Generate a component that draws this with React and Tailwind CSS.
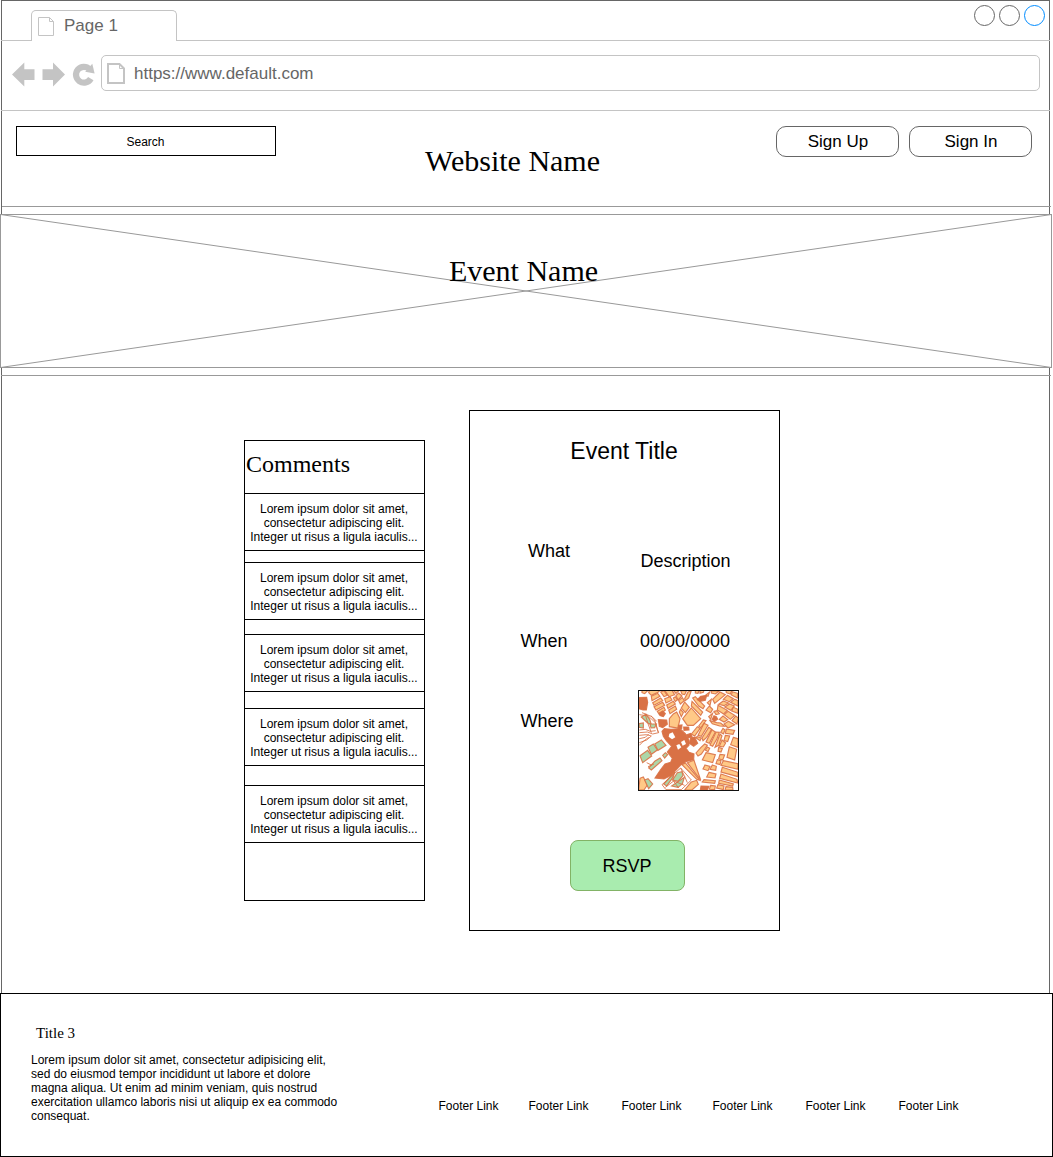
import React from "react";

const comments = [
  { id: 1, gap: "mt-0" },
  { id: 2, gap: "mt-[11px]" },
  { id: 3, gap: "mt-[14px]" },
  { id: 4, gap: "mt-[16px]" },
  { id: 5, gap: "mt-[19px]" },
];

const footerLinks = [
  "ml-[95.5px]",
  "ml-[30px]",
  "ml-[33px]",
  "ml-[31px]",
  "ml-[33px]",
  "ml-[33px]",
];

const blocks = [
  // north-west
  "30,19 48,19 38,29 30,26",
  "52,19 84,19 78,25 58,34 50,26",
  "58,37 77,28 84,37 60,50",
  "62,56 86,42 92,50 66,64",
  "66,68 92,55 98,64 72,78",
  "86,24 96,20 106,34 96,38",
  "98,19 120,19 128,32 111,38",
  "98,44 114,38 120,48 102,57",
  "104,63 124,52 130,60 108,73",
  "110,78 130,66 134,76 114,89",
  "76,82 96,70 100,78 82,92",
  "124,19 142,19 132,28",
  "132,35 140,27 150,36 138,48",
  "140,50 151,41 157,50 145,60",
  "124,42 130,38 136,47 130,53",
  "112,104 124,90 134,84 144,104 138,132 112,128",
  // north-centre
  "146,20 164,19 158,32 150,30",
  "168,24 178,20 170,42 160,50 158,44",
  "158,54 172,70 160,86 148,72",
  "146,76 154,86 148,98 142,84",
  "178,72 206,104 184,124 166,124 152,104",
  "182,42 190,38 218,66 213,74 200,66",
  "180,52 212,84 206,94 178,66",
  "190,19 202,19 198,28 190,27",
  "204,19 216,19 214,25 204,28",
  // north-east
  "220,34 233,24 228,37",
  "232,66 242,76 236,86 222,78",
  "226,56 238,46 234,64",
  "238,20 262,21 250,30 238,27",
  "264,24 280,32 262,47 248,58 242,46",
  "282,19 300,19 295,30 283,26",
  "301,23 317,28 317,42 298,33",
  "286,34 304,44 292,53 274,46",
  "308,46 318,50 318,66 296,55",
  "274,51 290,57 276,65 260,61",
  "293,60 307,66 296,79 278,69",
  "258,64 286,79 275,90 256,78",
  "288,82 308,94 295,106 277,92",
  "304,70 318,76 318,88 299,81",
  "311,96 319,102 315,120 300,110",
  "273,96 287,107 276,114 262,106",
  "289,112 308,122 288,132 276,120",
  "246,82 255,80 262,89 252,92",
  "230,98 242,88 236,106",
  "232,108 240,112 254,116 266,117 278,127 263,126 241,119",
  // east
  "200,126 214,108 222,110 206,132",
  "178,150 196,128 204,134 188,156",
  "216,118 228,124 208,157 198,154",
  "190,160 196,158 208,162 204,170",
  "230,130 239,136 224,160 213,170 210,162",
  "240,137 250,144 232,178 222,174",
  "252,144 262,145 255,164 242,187 234,183",
  "264,150 270,156 260,184 249,190",
  "273,133 279,138 274,150 266,145",
  "283,135 308,139 303,151 280,148",
  "280,154 293,156 287,173 276,170",
  "270,168 281,177 274,189 262,187",
  "260,190 271,194 267,204 258,202",
  "292,188 314,196 308,228 285,220",
  "304,160 318,164 318,190 296,182",
  "264,211 278,213 272,228 260,224",
  "256,227 267,230 264,242 252,239",
  "274,230 318,239 318,256 267,244",
  "271,250 318,265 318,278 267,264",
  "267,270 315,286 317,297 263,283",
  "262,288 304,300 302,306 260,298",
  "258,302 276,306 274,317 254,312",
  "282,308 302,310 303,318 279,318",
  "207,190 218,180 226,184 208,210 198,216 192,207",
  "226,189 233,193 228,203 220,198",
  "222,206 250,212 242,236 211,228",
  "241,243 253,247 251,259 234,256",
  "219,243 234,247 228,260 213,255",
  "231,265 252,270 249,282 224,279",
  "216,287 250,290 248,298 211,294",
  "236,304 250,306 248,317 232,316",
  // south
  "150,242 160,237 204,289 194,286",
  "166,236 186,229 206,288",
  "178,294 194,289 199,301 180,318 158,318",
  "24,283 34,279 46,303 36,318 20,318",
];

const darkBlocks = [
  "20,41 44,40 47,55 43,78 33,78 20,74",
  "82,87 92,81 100,89 94,98 84,95",
  "79,107 104,108 106,121 92,131 82,127",
  "206,37 224,34 220,49 204,52 196,47",
  "246,95 253,98 257,105 248,112 240,107",
  "97,134 117,136 144,134 160,149 171,169 171,184 162,193 171,205 186,210 185,227 161,233 145,244 118,274 96,285 69,282 85,258 99,240 116,235 121,223 106,204 119,187 103,170 94,157 90,142",
  "176,161 188,160 197,178 185,187 172,178",
  "164,152 176,148 180,158 168,162",
  "155,129 170,129 171,138 156,139",
  "139,124 150,123 149,134 139,134",
  "207,306 231,307 226,318 205,318",
];

const greenBlocks = [
  "48,190 64,180 76,198 58,211",
  "68,180 88,168 102,184 78,199",
  "24,215 47,199 59,216 32,236",
  "68,232 84,222 90,230 58,258 50,252",
  "92,214 100,206 107,212 98,222",
  "28,99 42,91 53,106 58,122 46,116",
  "54,120 73,120 68,131 57,132",
  "21,119 34,117 34,132 21,130",
  "95,300 128,264 120,284 104,306",
  "122,288 136,266 150,263 153,275 138,292",
  "119,306 157,280 151,300 138,310",
  "38,288 48,284 62,300 50,314",
];

const mapLines = [
  "22,92 49,96 71,117 76,137 80,146",
  "30,86 60,98 74,112",
  "39,89 48,119 58,146",
  "57,95 69,111 79,146",
  "22,138 40,136 55,142 71,140",
  "22,146 46,144 62,150 80,146",
  "22,154 44,152 58,156 44,168 22,176",
  "22,164 40,160 50,150",
  "22,184 34,172 50,160",
  "90,302 146,252 178,288 148,317 102,317 90,302",
  "100,310 125,291 158,304",
  "146,252 160,282 166,296",
  "128,264 122,288 140,312",
  "44,236 60,244",
  "48,248 66,240",
];

function Polygons({ items, fill }) {
  return (
    <g fill={fill} stroke="#d97145" strokeOpacity="0.9" strokeWidth="3.4">
      {items.map((points) => (
        <polygon key={points} points={points} />
      ))}
    </g>
  );
}

function StreetMap() {
  return (
    <svg className="block h-[101px] w-[101px]" viewBox="18 18 303 303" aria-label="Map">
      <rect x="18" y="18" width="303" height="303" fill="#fff" />
      <Polygons items={blocks} fill="#ffc987" />
      <Polygons items={darkBlocks} fill="#d97145" />
      <Polygons items={greenBlocks} fill="#add6a8" />
      <g fill="none" stroke="#d97145" strokeOpacity="0.85" strokeWidth="3">
        {mapLines.map((points) => (
          <polyline key={points} points={points} />
        ))}
      </g>
      <g fill="#fff">
        <polygon points="112,149 122,145 130,160 120,166 110,158" />
        <polygon points="147,174 157,168 162,180 152,185" />
        <polygon points="133,184 142,180 148,190 138,197" />
      </g>
      <rect x="19.5" y="19.5" width="300" height="300" fill="none" stroke="#111" strokeWidth="3" />
    </svg>
  );
}

function PageIcon({ bold }) {
  return bold ? (
    <svg className="block h-[21px] w-[18px]" viewBox="0 0 18 21" fill="none" stroke="#c4c4c4">
      <path d="M1 1H12.5L17 5.5V20H1Z" strokeWidth="2" />
      <path d="M12.5 1V5.5H17" strokeWidth="1" />
    </svg>
  ) : (
    <svg className="block h-[19px] w-4" viewBox="0 0 16 19" fill="none" stroke="#c4c4c4">
      <path d="M.5 .5H11.5L15.5 4.5V18.5H.5ZM11.5 .5V4.5H15.5" />
    </svg>
  );
}

function BrowserBar() {
  return (
    <>
      <div className="-mx-px flex h-10 items-end">
        <div className="h-px w-[30px] bg-[#c4c4c4]" />
        <div className="flex h-[31px] w-[146px] rounded-t-[5px] border border-b-0 border-[#c4c4c4] pl-[6px] pt-[6px] text-[17px] leading-[18px] text-[#666]">
          <PageIcon />
          <span className="ml-[10px]">Page 1</span>
        </div>
        <div className="flex h-10 flex-1 justify-end gap-1 border-b border-[#c4c4c4] pr-[5px] pt-1">
          <div className="size-[21px] rounded-full border border-[#666]" />
          <div className="size-[21px] rounded-full border border-[#666]" />
          <div className="size-[21px] rounded-full border border-[#008cff]" />
        </div>
      </div>
      <div className="-mx-px flex h-[70px] border-b border-[#c4c4c4] pl-[11px] pt-[14px]">
        <svg className="mt-[7px] h-[25px] w-[84px]" viewBox="0 0 84 25" fill="#c4c4c4">
          <path d="M0 12.5 12.3 .5V7.2H22.5V18H12.3V24.5Z" />
          <path d="M53 12.5 41 .5V7.2H30.5V18H41V24.5Z" />
          <path
            d="M78.8 16.6A7.9 7.9 0 1 1 77.6 7.2"
            fill="none"
            stroke="#c4c4c4"
            strokeWidth="6.2"
          />
          <path d="M80.3 1.8 82.6 11.4 73.2 9.8Z" />
        </svg>
        <div className="ml-[5px] flex h-9 w-[939px] rounded-[5px] border border-[#c4c4c4] pl-[5px] pt-[7px]">
          <PageIcon bold />
          <span className="ml-[9px] text-[17px] leading-[21px] text-[#666]">
            https://www.default.com
          </span>
        </div>
      </div>
    </>
  );
}

function SiteHeader() {
  return (
    <header className="-mr-[2px] flex h-24 items-start border-b border-[#999] pl-[14px] pt-[15px]">
      <div className="h-[30px] w-[260px] border border-black pr-px text-center text-xs leading-[30px]">
        Search
      </div>
      <h1 className="ml-[149px] mt-[17px] w-[176px] whitespace-nowrap font-['Liberation_Serif',serif] text-[30px] leading-[36px]">
        Website Name
      </h1>
      <button className="ml-[175px] h-[31px] w-[123px] rounded-[10px] border border-[#666] pl-px text-[17px] leading-[29px]">
        Sign Up
      </button>
      <button className="ml-[10px] h-[31px] w-[123px] rounded-[10px] border border-[#666] pl-px text-[17px] leading-[29px]">
        Sign In
      </button>
    </header>
  );
}

function Banner() {
  return (
    <section className="relative -ml-[2px] mt-[7px] h-[154px] w-[1052px] border border-[#999] bg-white">
      <svg
        className="absolute -left-px -top-px h-[154px] w-[1052px]"
        viewBox="0 0 1052 154"
        stroke="#999"
      >
        <path d="M.5 .5 1051.5 153.5M.5 153.5 1051.5 .5" />
      </svg>
      <h2 className="relative pr-[5px] pt-[38px] text-center font-['Liberation_Serif',serif] text-[30px] leading-[36px]">
        Event Name
      </h2>
    </section>
  );
}

function Comments() {
  return (
    <section className="mt-[30px] h-[461px] w-[181px] border border-black">
      <h3 className="h-[52px] pl-px pt-[9px] font-['Liberation_Serif',serif] text-2xl leading-[28px]">
        Comments
      </h3>
      {comments.map(({ id, gap }) => (
        <p
          key={id}
          className={`${gap} h-[58px] whitespace-nowrap border-y border-black pr-px pt-[8px] text-center text-xs leading-[14px]`}
        >
          Lorem ipsum dolor sit amet,
          <br />
          consectetur adipiscing elit.
          <br />
          Integer ut risus a ligula iaculis...
        </p>
      ))}
    </section>
  );
}

function EventCard() {
  return (
    <section className="ml-11 h-[521px] w-[311px] border border-black text-lg leading-[22px]">
      <h3 className="pr-px pt-[26px] text-center text-[23px] leading-[28px]">Event Title</h3>
      <div className="mt-[75px] flex">
        <span className="ml-[58px] w-[112.5px]">What</span>
        <span className="mt-[10px]">Description</span>
      </div>
      <div className="mt-[58px] flex">
        <span className="ml-[50.5px] w-[119.5px]">When</span>
        <span>00/00/0000</span>
      </div>
      <div className="mt-[38px] flex">
        <span className="ml-[50.5px] mt-5 w-[117.5px]">Where</span>
        <StreetMap />
      </div>
      <button className="ml-[100px] mt-[49px] block h-[51px] w-[115px] rounded-[8px] border border-[#82b366] bg-[#a9ecaf] pr-px pt-px text-lg leading-[49px]">
        RSVP
      </button>
    </section>
  );
}

function Footer() {
  return (
    <footer className="flex h-[164px] w-[1053px] border border-black bg-white text-xs leading-[14px]">
      <div className="ml-[30px] w-[312px] pt-[30px]">
        <h4 className="ml-[5px] font-['Liberation_Serif',serif] text-[15px] leading-[18px]">
          Title 3
        </h4>
        <p className="mt-[11px] whitespace-nowrap">
          Lorem ipsum dolor sit amet, consectetur adipisicing elit,
          <br />
          sed do eiusmod tempor incididunt ut labore et dolore
          <br />
          magna aliqua. Ut enim ad minim veniam, quis nostrud
          <br />
          exercitation ullamco laboris nisi ut aliquip ex ea commodo
          <br />
          consequat.
        </p>
      </div>
      <nav className="flex pt-[105px]">
        {footerLinks.map((offset, i) => (
          <a key={i} className={`${offset} w-[60px] whitespace-nowrap`}>
            Footer Link
          </a>
        ))}
      </nav>
    </footer>
  );
}

export default function App() {
  return (
    <div className="h-[1157px] w-[1053px] overflow-hidden bg-white font-['Liberation_Sans',Arial,sans-serif] text-black">
      <div className="ml-px h-[993px] w-[1049px] border-x border-t border-[#666]">
        <BrowserBar />
        <SiteHeader />
        <Banner />
        <div className="-mx-px mt-[7px] h-px w-[1050px] bg-[#999]" />
        <main className="ml-[242px] mt-[34px] flex items-start">
          <Comments />
          <EventCard />
        </main>
      </div>
      <Footer />
    </div>
  );
}
